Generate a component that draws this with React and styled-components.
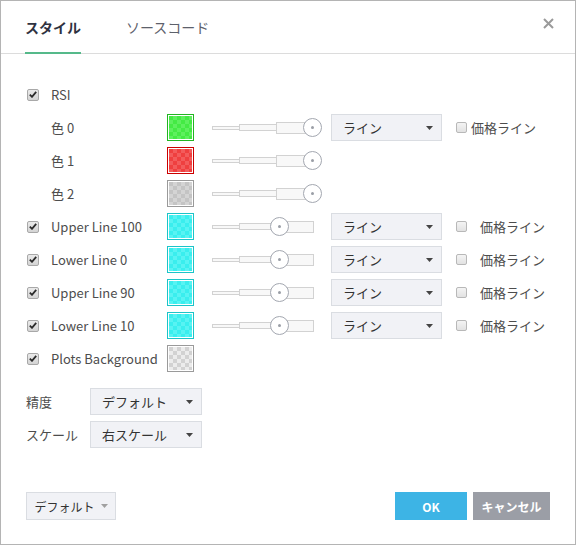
import React from "react";
import styled, { createGlobalStyle } from "styled-components";

const GlobalStyle = createGlobalStyle`
  html, body {
    margin: 0;
    padding: 0;
    background: #ffffff;
  }
  body {
    font-family: "Noto Sans CJK JP", "Noto Sans", sans-serif;
    color: #4a4a4a;
  }
`;

const StyledDialog = styled.div`
  width: 576px;
  height: 545px;
  box-sizing: border-box;
  border: 1px solid #b4b4b4;
  background: #ffffff;
  display: flex;
  flex-direction: column;
`;

const StyledHeader = styled.div`
  height: 53px;
  box-sizing: border-box;
  border-bottom: 1px solid #dcdcdc;
  display: flex;
  align-items: stretch;
  padding: 0 0 0 24px;
  position: relative;
`;

const StyledTab = styled.div`
  display: flex;
  align-items: center;
  margin-right: 45px;
  font-size: 14px;
  font-weight: ${(p) => (p.$active ? 700 : 400)};
  color: ${(p) => (p.$active ? "#2f3241" : "#5d616b")};
  box-sizing: border-box;
  border-bottom: 2px solid ${(p) => (p.$active ? "#55b98a" : "transparent")};
  margin-bottom: -1px;
`;

const StyledClose = styled.div`
  position: absolute;
  right: 21px;
  top: 17px;
  width: 11px;
  height: 11px;
  color: #9a9a9a;
  svg {
    display: block;
  }
`;

const StyledBody = styled.div`
  padding: 24px 0 0 25px;
  display: flex;
  flex-direction: column;
`;

const StyledRow = styled.div`
  display: grid;
  grid-template-columns: 25px 116px 27px 18px 110px 9px 111px auto;
  align-items: center;
  height: 33px;
`;

const StyledLabel = styled.div`
  font-size: 13px;
  color: #4d4d4d;
  white-space: nowrap;
  grid-column: ${(p) => p.$col || "auto"};
`;

const StyledCheck = styled.div`
  width: 12px;
  height: 12px;
  box-sizing: border-box;
  border: 1px solid #a8a8a8;
  border-radius: 2px;
  background: linear-gradient(#eaeaea, #d4d4d4);
  display: flex;
  align-items: center;
  justify-content: center;
  margin-left: 1px;
`;

const StyledSwatch = styled.div`
  grid-column: 3;
  width: 27px;
  height: 27px;
  box-sizing: border-box;
  border: 1px solid ${(p) => p.$border};
  padding: 1px;
  background: #ffffff;
  &::after {
    content: "";
    display: block;
    width: 100%;
    height: 100%;
    background: repeating-conic-gradient(
        ${(p) => p.$light} 0 25%,
        ${(p) => p.$base} 0 50%
      )
      0 0 / 8px 8px;
  }
`;

const StyledSlider = styled.div`
  grid-column: 5;
  position: relative;
  width: 110px;
  height: 19px;
  display: flex;
  align-items: center;
`;

const StyledSegment = styled.div`
  width: ${(p) => p.$w}px;
  height: ${(p) => p.$h}px;
  box-sizing: border-box;
  border: 1px solid #d2d2d2;
  background: #f8f8f8;
  margin-left: -1px;
  &:first-child {
    margin-left: 0;
  }
`;

const StyledHandle = styled.div`
  position: absolute;
  top: 0;
  width: 19px;
  height: 19px;
  box-sizing: border-box;
  border: 1px solid #a3a7b0;
  border-radius: 50%;
  background: #ffffff;
  display: flex;
  align-items: center;
  justify-content: center;
  &::after {
    content: "";
    width: 3px;
    height: 3px;
    border-radius: 50%;
    background: #9a9ea6;
  }
`;

const StyledSelect = styled.div`
  grid-column: ${(p) => p.$col || "auto"};
  width: ${(p) => p.$w || 111}px;
  height: 27px;
  box-sizing: border-box;
  border: 1px solid #dadde2;
  background: #f1f2f6;
  padding: 0 8px 0 11px;
  display: flex;
  align-items: center;
  justify-content: space-between;
  font-size: 13px;
  color: #333333;
`;

const StyledPrice = styled.div`
  grid-column: 8;
  display: flex;
  align-items: center;
  margin-left: 14px;
  font-size: 13px;
  color: #4d4d4d;
  white-space: nowrap;
`;

const StyledBox = styled.div`
  width: 11px;
  height: 11px;
  box-sizing: border-box;
  border: 1px solid #b8b8b8;
  border-radius: 2px;
  background: linear-gradient(#f4f4f4, #e2e2e2);
  margin-right: ${(p) => p.$gap}px;
`;

const StyledOptions = styled.div`
  display: flex;
  flex-direction: column;
  gap: 6px;
  margin-top: 13px;
`;

const StyledOptionRow = styled.div`
  display: flex;
  align-items: center;
`;

const StyledOptionLabel = styled.div`
  width: 64px;
  font-size: 13px;
  color: #4d4d4d;
  white-space: nowrap;
`;

const StyledFooter = styled.div`
  margin-top: auto;
  padding: 0 25px 24px 25px;
  display: flex;
  align-items: center;
`;

const StyledDefaultButton = styled.div`
  width: 90px;
  height: 28px;
  box-sizing: border-box;
  border: 1px solid #dadde2;
  background: #f1f2f6;
  display: flex;
  align-items: center;
  justify-content: center;
  gap: 6px;
  font-size: 12px;
  color: #333333;
`;

const StyledButton = styled.div`
  width: ${(p) => p.$w}px;
  height: 28px;
  background: ${(p) => p.$bg};
  color: #ffffff;
  font-size: 12px;
  font-weight: 700;
  display: flex;
  align-items: center;
  justify-content: center;
  margin-left: ${(p) => p.$ml || 0}px;
`;

const StyledSpacer = styled.div`
  flex: 1;
`;

const Caret = ({ color = "#444" }) => (
  <svg width="7" height="4" viewBox="0 0 7 4">
    <path d="M0 0 L7 0 L3.5 4 Z" fill={color} />
  </svg>
);

const CheckMark = () => (
  <svg width="8" height="7" viewBox="0 0 8 7">
    <path
      d="M0.8 3.6 L3 5.8 L7.2 0.9"
      fill="none"
      stroke="#2b2b2b"
      strokeWidth="1.8"
    />
  </svg>
);

const Slider = ({ value }) => (
  <StyledSlider>
    <StyledSegment $w={28} $h={4} />
    <StyledSegment $w={38} $h={7} />
    <StyledSegment $w={38} $h={12} />
    <StyledHandle style={{ left: value - 9 }} />
  </StyledSlider>
);

const swatches = {
  green: { border: "#22b522", base: "#44ea44", light: "#5ef05e" },
  red: { border: "#cc0000", base: "#ef4040", light: "#f35c5c" },
  gray: { border: "#9a9a9a", base: "#c4c4c4", light: "#d4d4d4" },
  cyan: { border: "#1cc4c8", base: "#3aeeee", light: "#58f3f3" },
  bg: { border: "#9a9a9a", base: "#d2d2d2", light: "#ececec" },
};

const Swatch = ({ kind }) => {
  const s = swatches[kind];
  return <StyledSwatch $border={s.border} $base={s.base} $light={s.light} />;
};

const LineSelect = () => (
  <StyledSelect $col={7}>
    <span>ライン</span>
    <Caret />
  </StyledSelect>
);

const lineRows = [
  { label: "Upper Line 100" },
  { label: "Lower Line 0" },
  { label: "Upper Line 90" },
  { label: "Lower Line 10" },
];

export default function App() {
  return (
    <>
      <GlobalStyle />
      <StyledDialog>
        <StyledHeader>
          <StyledTab $active>スタイル</StyledTab>
          <StyledTab>ソースコード</StyledTab>
          <StyledClose>
            <svg width="11" height="11" viewBox="0 0 11 11">
              <path
                d="M1 1 L10 10 M10 1 L1 10"
                stroke="currentColor"
                strokeWidth="2"
              />
            </svg>
          </StyledClose>
        </StyledHeader>

        <StyledBody>
          <StyledRow>
            <StyledCheck>
              <CheckMark />
            </StyledCheck>
            <StyledLabel>RSI</StyledLabel>
          </StyledRow>

          <StyledRow>
            <StyledLabel $col={2}>色 0</StyledLabel>
            <Swatch kind="green" />
            <Slider value={100} />
            <LineSelect />
            <StyledPrice>
              <StyledBox $gap={4} />
              価格ライン
            </StyledPrice>
          </StyledRow>

          <StyledRow>
            <StyledLabel $col={2}>色 1</StyledLabel>
            <Swatch kind="red" />
            <Slider value={100} />
          </StyledRow>

          <StyledRow>
            <StyledLabel $col={2}>色 2</StyledLabel>
            <Swatch kind="gray" />
            <Slider value={100} />
          </StyledRow>

          {lineRows.map((row) => (
            <StyledRow key={row.label}>
              <StyledCheck>
                <CheckMark />
              </StyledCheck>
              <StyledLabel>{row.label}</StyledLabel>
              <Swatch kind="cyan" />
              <Slider value={67} />
              <LineSelect />
              <StyledPrice>
                <StyledBox $gap={13} />
                価格ライン
              </StyledPrice>
            </StyledRow>
          ))}

          <StyledRow>
            <StyledCheck>
              <CheckMark />
            </StyledCheck>
            <StyledLabel>Plots Background</StyledLabel>
            <Swatch kind="bg" />
          </StyledRow>

          <StyledOptions>
            <StyledOptionRow>
              <StyledOptionLabel>精度</StyledOptionLabel>
              <StyledSelect $w={112}>
                デフォルト
                <Caret />
              </StyledSelect>
            </StyledOptionRow>
            <StyledOptionRow>
              <StyledOptionLabel>スケール</StyledOptionLabel>
              <StyledSelect $w={112}>
                右スケール
                <Caret />
              </StyledSelect>
            </StyledOptionRow>
          </StyledOptions>
        </StyledBody>

        <StyledFooter>
          <StyledDefaultButton>
            デフォルト
            <Caret color="#a0a0a0" />
          </StyledDefaultButton>
          <StyledSpacer />
          <StyledButton $w={72} $bg="#3db4e5">
            OK
          </StyledButton>
          <StyledButton $w={77} $bg="#9b9ea6" $ml={6}>
            キャンセル
          </StyledButton>
        </StyledFooter>
      </StyledDialog>
    </>
  );
}
